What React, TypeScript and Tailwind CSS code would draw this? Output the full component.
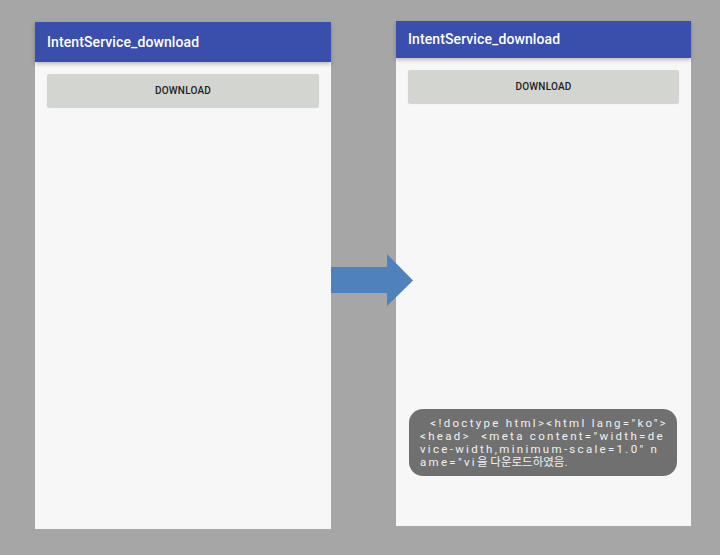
import React from 'react';

const font = { fontFamily: 'Roboto, "Noto Sans CJK KR", sans-serif' };

const Phone: React.FC<{ className: string; headerH: string; children?: React.ReactNode }> = ({ className, headerH, children }) => (
  <div className={`relative bg-[#f7f7f7] flex flex-col ${className}`}>
    <div className={`${headerH} bg-[#3a4eac] flex items-center px-3 shadow-[0_2px_4px_rgba(0,0,0,0.25)] z-10`}>
      <span className="text-[14px] font-medium text-white tracking-[0.1px]">IntentService_download</span>
    </div>
    <div className="px-3 pt-3">
      <button className="w-full h-[33px] bg-[#d3d5d0] rounded-[2px] shadow-[0_1px_1px_rgba(0,0,0,0.15)] text-[10px] font-medium text-[#1e1e1e] tracking-[0.2px]">
        DOWNLOAD
      </button>
    </div>
    {children}
  </div>
);

const App: React.FC = () => {
  return (
    <div className="relative w-[720px] h-[555px] bg-[#a6a6a6] flex items-start pl-[35px] gap-[65px]" style={font}>
      <Phone className="mt-[22px] w-[296px] h-[507px]" headerH="h-[40px]" />

      <Phone className="mt-[21px] w-[295px] h-[505px]" headerH="h-[37px]">
        {/* toast */}
        <div className="absolute left-[13px] top-[388px] w-[268px] h-[67px] bg-[#707070] rounded-[14px] pl-[11px] pt-[8px] text-[11.5px] leading-[13px] text-[#f0f0f0] whitespace-pre">
          <div className="tracking-[2.3px]">{'  <!doctype html><html lang="ko">'}</div>
          <div className="tracking-[2.3px]">{'<head>  <meta content="width=de'}</div>
          <div className="tracking-[2.3px]">{'vice-width,minimum-scale=1.0" n'}</div>
          <div>
            <span className="tracking-[2.3px]">{'ame="vi'}</span>
            <span>을 다운로드하였음.</span>
          </div>
        </div>
      </Phone>

      {/* arrow */}
      <svg className="absolute left-[331px] top-[254px]" width="82" height="52" viewBox="0 0 82 52">
        <polygon points="0,13 56,13 56,0 82,26.5 56,52 56,39 0,39" fill="#4f81bd" />
      </svg>
    </div>
  );
};

export default App;
